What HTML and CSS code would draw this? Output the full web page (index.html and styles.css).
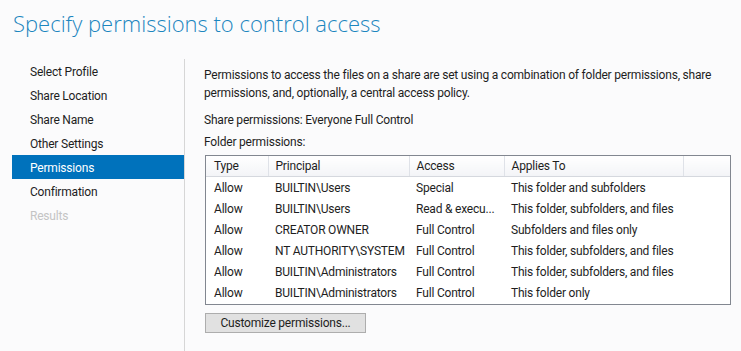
FILE: index.html
```html
<!DOCTYPE html>
<html lang="en">
<head>
    <meta charset="UTF-8">
    <title>Specify permissions to control access</title>
    <link rel="stylesheet" href="styles.css">
</head>
<body>
    <h1 class="title">Specify permissions to control access</h1>

    <div class="wizard">
        <ul class="steps">
            <li>Select Profile</li>
            <li>Share Location</li>
            <li>Share Name</li>
            <li>Other Settings</li>
            <li class="active">Permissions</li>
            <li>Confirmation</li>
            <li class="disabled">Results</li>
        </ul>

        <div class="content">
            <p class="intro">Permissions to access the files on a share are set using a combination of folder permissions, share permissions, and, optionally, a central access policy.</p>
            <p class="line">Share permissions: Everyone Full Control</p>
            <p class="line">Folder permissions:</p>

            <div class="list">
                <table>
                    <colgroup>
                        <col class="c-type">
                        <col class="c-principal">
                        <col class="c-access">
                        <col class="c-applies">
                        <col>
                    </colgroup>
                    <thead>
                        <tr>
                            <th>Type</th>
                            <th>Principal</th>
                            <th>Access</th>
                            <th>Applies To</th>
                            <th class="filler"></th>
                        </tr>
                    </thead>
                    <tbody>
                        <tr><td>Allow</td><td>BUILTIN\Users</td><td>Special</td><td>This folder and subfolders</td><td></td></tr>
                        <tr><td>Allow</td><td>BUILTIN\Users</td><td>Read &amp; execu...</td><td>This folder, subfolders, and files</td><td></td></tr>
                        <tr><td>Allow</td><td>CREATOR OWNER</td><td>Full Control</td><td>Subfolders and files only</td><td></td></tr>
                        <tr><td>Allow</td><td>NT AUTHORITY\SYSTEM</td><td>Full Control</td><td>This folder, subfolders, and files</td><td></td></tr>
                        <tr><td>Allow</td><td>BUILTIN\Administrators</td><td>Full Control</td><td>This folder, subfolders, and files</td><td></td></tr>
                        <tr><td>Allow</td><td>BUILTIN\Administrators</td><td>Full Control</td><td>This folder only</td><td></td></tr>
                    </tbody>
                </table>
            </div>

            <button class="btn">Customize permissions...</button>
        </div>
    </div>
</body>
</html>
```

FILE: styles.css
```css
body {
    margin: 0;
    background: #fbfbfc;
    font-family: "Segoe UI", Roboto, "Noto Sans", sans-serif;
    font-size: 12px;
    letter-spacing: -0.2px;
    color: #1e1e1e;
    height: 351px;
    overflow: hidden;
}
.title {
    margin: 0;
    padding: 8px 0 0 13px;
    height: 56px;
    box-sizing: border-box;
    font-family: "Segoe UI Light", "Open Sans", sans-serif;
    font-size: 22px;
    font-weight: 300;
    letter-spacing: 0;
    color: #1c86bf;
}
.wizard {
    display: flex;
    margin-top: 3px;
}
.steps {
    list-style: none;
    margin: 0;
    padding: 0 0 0 12px;
    width: 172px;
    border-right: 1px solid #d6d6d6;
    height: 300px;
}
.steps li {
    height: 24px;
    line-height: 26px;
    padding-left: 18px;
}
.steps li.active {
    background: #0072bc;
    color: #fff;
}
.steps li.disabled {
    color: #c4c4c4;
}
.content {
    padding: 7px 0 0 19px;
    width: 526px;
}
.intro {
    margin: 0 0 9px;
    line-height: 18px;
}
.line {
    margin: 0 0 4px;
    line-height: 18px;
}
.list {
    width: 524px;
    height: 148px;
    border: 1px solid #828790;
    background: #fff;
    margin: 2px 0 8px 1px;
}
table {
    width: 524px;
    border-collapse: collapse;
    table-layout: fixed;
}
.c-type { width: 62px; }
.c-principal { width: 141px; }
.c-access { width: 95px; }
.c-applies { width: 179px; }
th {
    height: 20px;
    padding: 0 0 0 7px;
    text-align: left;
    font-weight: normal;
    background: linear-gradient(#ffffff, #f3f4f7);
    border-right: 1px solid #dfe2e8;
    border-bottom: 1px solid #d5d8de;
    white-space: nowrap;
}
th.filler {
    border-right: none;
}
td {
    height: 21px;
    padding: 0 0 0 7px;
    white-space: nowrap;
    overflow: hidden;
}
td:first-child, th:first-child {
    padding-left: 8px;
}
.btn {
    display: block;
    margin-left: 1px;
    width: 161px;
    height: 20px;
    padding: 0;
    font-family: inherit;
    font-size: 12px;
    letter-spacing: -0.2px;
    color: #1e1e1e;
    background: #e1e1e1;
    border: 1px solid #adadad;
}
```
